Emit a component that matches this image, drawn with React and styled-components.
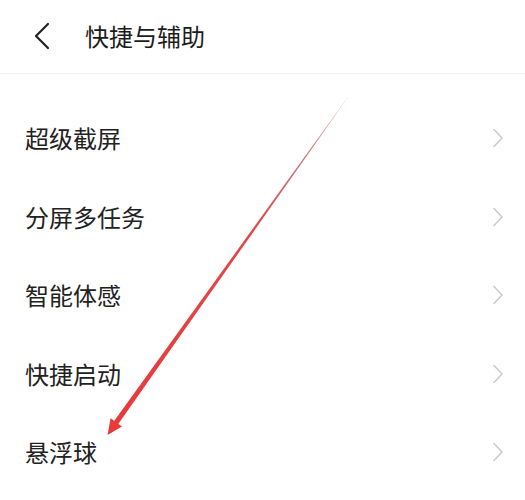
import React from "react";
import styled, { createGlobalStyle } from "styled-components";

const Global = createGlobalStyle`
  html, body { margin: 0; padding: 0; background: #fff; }
  body { font-family: "Noto Sans CJK SC", "Noto Sans", sans-serif; }
`;

const Page = styled.div`
  position: relative;
  width: 525px;
  height: 500px;
  background: #fff;
  overflow: hidden;
`;

const Header = styled.header`
  display: flex;
  align-items: center;
  height: 74px;
  border-bottom: 1px solid #f1f1f1;
  padding-left: 33px;
  box-sizing: border-box;
`;

const BackButton = styled.div`
  display: flex;
  align-items: center;
  width: 20px;
  height: 28px;
  margin-right: 32px;
  margin-top: -2px;
`;

const Title = styled.h1`
  margin: 0;
  font-size: 24px;
  font-weight: 400;
  color: #1c1c1c;
  line-height: 1;
  margin-top: -2px;
`;

const List = styled.ul`
  list-style: none;
  margin: 0;
  padding: 25px 0 0 0;
`;

const Row = styled.li`
  display: flex;
  align-items: center;
  justify-content: space-between;
  height: 78.5px;
  padding: 0 21px 0 25px;
  box-sizing: border-box;
`;

const Label = styled.span`
  font-size: 24px;
  color: #222;
  line-height: 1;
`;

const Overlay = styled.svg`
  position: absolute;
  left: 0;
  top: 0;
  pointer-events: none;
`;

const items = ["超级截屏", "分屏多任务", "智能体感", "快捷启动", "悬浮球"];

function Chevron() {
  return (
    <svg width="12" height="20" viewBox="0 0 12 20">
      <path d="M2 1.5 L10 10 L2 18.5" fill="none" stroke="#cbcbcb" strokeWidth="1.6" strokeLinecap="round" strokeLinejoin="round" />
    </svg>
  );
}

export default function App() {
  return (
    <>
      <Global />
      <Page>
        <Header>
          <BackButton>
            <svg width="18" height="28" viewBox="0 0 18 28">
              <path d="M15 2 L3 14 L15 26" fill="none" stroke="#222" strokeWidth="2.2" strokeLinecap="round" strokeLinejoin="round" />
            </svg>
          </BackButton>
          <Title>快捷与辅助</Title>
        </Header>
        <List>
          {items.map((t) => (
            <Row key={t}>
              <Label>{t}</Label>
              <Chevron />
            </Row>
          ))}
        </List>
        <Overlay width="525" height="500" viewBox="0 0 525 500">
          <defs>
            <linearGradient id="fade" x1="348" y1="97" x2="113" y2="427" gradientUnits="userSpaceOnUse">
              <stop offset="0" stopColor="#f4d6d6" />
              <stop offset="0.15" stopColor="#c97a7a" />
              <stop offset="0.4" stopColor="#e04848" />
              <stop offset="1" stopColor="#e8393c" />
            </linearGradient>
          </defs>
          <polygon
            points="348.2,97.1 347.8,96.9 110.9,425.5 115.1,428.5"
            fill="url(#fade)"
          />
          <polygon points="107.5,435 122,426.6 110.6,418.3" fill="#e8393c" />
        </Overlay>
      </Page>
    </>
  );
}
